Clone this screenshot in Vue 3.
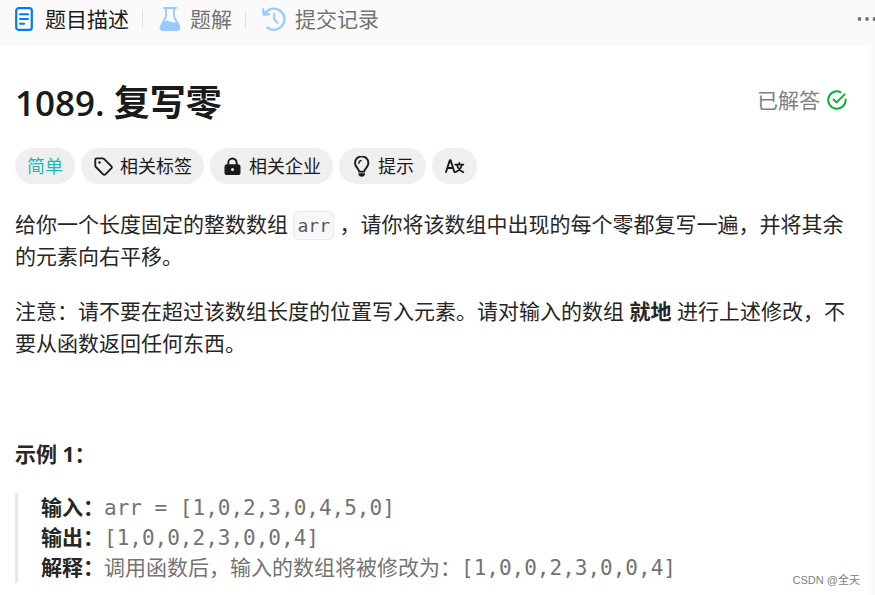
<script setup>
const tags = [
  { icon: 'tag', label: '相关标签' },
  { icon: 'lock', label: '相关企业' },
  { icon: 'bulb', label: '提示' },
]
</script>

<template>
  <div class="page" lang="zh-CN">
    <header class="tabs">
      <nav class="tab-list" aria-label="题目">
        <button type="button" class="tab active">
          <svg class="tab-icon doc" viewBox="0 0 18 24" fill="none" stroke="#007aff">
            <rect x="1.2" y="1.2" width="15.6" height="21.6" rx="2.4" stroke-width="2.2" />
            <path d="M5 7.2h8M5 12h8M5 16.7h4" stroke-width="2" stroke-linecap="round" />
          </svg>
          <span>题目描述</span>
        </button>
        <span class="divider"></span>
        <button type="button" class="tab">
          <svg class="tab-icon flask" viewBox="0 0 22 24" fill="none" stroke="#99caff">
            <path d="M5 1h12" stroke-width="2" stroke-linecap="round" />
            <path d="M7 1v8.5L1.8 19.4Q.6 23 4 23h14q3.400 0 2.200-3.600L15 9.500V1" stroke-width="1.800" />
            <path d="M4.300 14.500Q8 12.800 11 14.500T17.700 14.500L21 20Q21.500 23.500 18 23.500H4Q.5 23.500 1 20Z" fill="#99caff" stroke="none" />
          </svg>
          <span>题解</span>
        </button>
        <span class="divider"></span>
        <button type="button" class="tab">
          <svg class="tab-icon history" viewBox="0 0 24 24" fill="none" stroke="#99caff" stroke-width="2.200" stroke-linecap="round" stroke-linejoin="round">
            <path d="M2.600 7A10.600 10.600 0 1 1 5.400 20.600" />
            <path d="M1.200 2.400L1.800 7.800L7 7.200" />
            <path d="M12.200 7v5.500l3.400 3.200" />
          </svg>
          <span>提交记录</span>
        </button>
      </nav>
      <button type="button" class="more" aria-label="更多">
        <svg viewBox="0 0 20 6" fill="#737373">
          <circle cx="2.500" cy="3" r="1.900" />
          <circle cx="10" cy="3" r="1.900" />
          <circle cx="17.500" cy="3" r="1.900" />
        </svg>
      </button>
    </header>

    <main class="panel">
      <div class="heading">
        <h1><span class="number">1089. </span>复写零</h1>
        <div class="solved">
          <span>已解答</span>
          <svg viewBox="0 0 20 20" fill="none" stroke="#02b128" stroke-width="1.900" stroke-linecap="round" stroke-linejoin="round">
            <path d="M13.500 2.100A8.700 8.700 0 1 0 18.600 9.500" />
            <path d="M6.500 9.500L9.600 12.300L17.500 4.300" />
          </svg>
        </div>
      </div>

      <div class="tags">
        <button type="button" class="tag easy">简单</button>
        <button v-for="tag in tags" :key="tag.icon" type="button" class="tag">
          <svg v-if="tag.icon === 'tag'" viewBox="0 0 21 21" fill="none" stroke="#1a1a1a" stroke-width="1.800" stroke-linejoin="round">
            <path d="M2.300 3.600Q2.300 2.300 3.600 2.300L9.700 2.300Q10.400 2.300 11 2.900L18.300 10.200Q19.400 11.300 18.300 12.400L12.400 18.300Q11.300 19.400 10.200 18.300L2.900 11Q2.300 10.400 2.300 9.700Z" />
            <circle cx="6.500" cy="6.500" r="1.200" fill="#1a1a1a" stroke="none" />
          </svg>
          <svg v-else-if="tag.icon === 'lock'" viewBox="0 0 21 21">
            <path d="M6.300 9V6.700a4.200 4.200 0 0 1 8.400 0V9" fill="none" stroke="#1a1a1a" stroke-width="1.900" />
            <rect x="2.500" y="8.300" width="16" height="10.700" rx="2.600" fill="#1a1a1a" />
            <circle cx="10.500" cy="13.600" r="1.500" fill="#efefef" />
          </svg>
          <svg v-else viewBox="0 0 21 21" fill="none" stroke="#1a1a1a" stroke-width="1.900">
            <path d="M8.200 15.600C8 13 4 11.200 4 7A6.700 6.700 0 0 1 17.400 7C17.400 11.200 13.400 13 13.200 15.600Z" stroke-linejoin="round" />
            <path d="M7.800 7.200Q8 4.900 10.100 4.600" stroke-width="1.500" stroke-linecap="round" />
            <path d="M7.500 17.200h6.400v1.300q-.5 2.300-3.200 2.300t-3.200-2.300z" fill="#1a1a1a" stroke="none" />
          </svg>
          <span>{{ tag.label }}</span>
        </button>
        <button type="button" class="tag" aria-label="翻译">
          <svg viewBox="0 0 21 21" fill="none" stroke="#1a1a1a" stroke-width="1.900" stroke-linecap="round" stroke-linejoin="round">
            <path d="M2 16L5.800 4.200h.8L10.400 16M3.400 12h5.500" />
            <path d="M11.200 8.600h8.200M15.300 6.800v1.800M13 9.200Q14.500 14 19.400 16.200M17.800 9.200Q16.400 14 11.300 16.200" stroke-width="1.700" />
          </svg>
        </button>
      </div>

      <article class="description">
        <p>给你一个长度固定的整数数组 <code>arr</code> ，请你将该数组中出现的每个零都复写一遍，并将其余的元素向右平移。</p>
        <p>注意：请不要在超过该数组长度的位置写入元素。请对输入的数组 <strong>就地</strong> 进行上述修改，不要从函数返回任何东西。</p>
        <h2>示例 1：</h2>
        <pre><strong>输入：</strong>arr = [1,0,2,3,0,4,5,0]
<strong>输出：</strong>[1,0,0,2,3,0,0,4]
<strong>解释：</strong>调用函数后，输入的数组将被修改为：[1,0,0,2,3,0,0,4]</pre>
      </article>
    </main>
    <div class="watermark">CSDN @全天</div>
  </div>
</template>

<style>
body {
  margin: 0;
  background: #fafafa;
}
</style>

<style scoped>
.page {
  position: relative;
  display: flex;
  flex-direction: column;
  min-height: 100vh;
  overflow: hidden;
  box-sizing: border-box;
  background: #fafafa;
  color: #262626;
  font-family: "Open Sans", "Noto Sans CJK SC", sans-serif;
  font-size: 21px;
}
button {
  border: 0;
  padding: 0;
  font: inherit;
  color: inherit;
  background: none;
  cursor: pointer;
}
.tabs {
  display: flex;
  justify-content: space-between;
  align-items: flex-start;
  height: 46px;
  padding-left: 15px;
  box-sizing: border-box;
}
.tab-list {
  display: flex;
  align-items: center;
  height: 38px;
}
.tab {
  display: flex;
  align-items: center;
  gap: 9px;
  color: #737373;
  line-height: 32px;
}
.tab.active {
  gap: 12px;
  color: #1a1a1a;
}
.tab-icon {
  height: 24px;
}
.doc {
  width: 18px;
}
.flask {
  width: 22px;
}
.history {
  width: 24px;
}
.divider {
  width: 1px;
  height: 18px;
  margin: 0 16px 0 13px;
  background: #e2e2e2;
}
.more {
  display: flex;
  align-items: center;
  height: 38px;
  margin-right: -2px;
}
.more svg {
  width: 20px;
  height: 6px;
}
.panel {
  flex: 1;
  margin-right: 4px;
  padding: 32px 24px 12px 15px;
  background: #fff;
}
.heading {
  display: flex;
  justify-content: space-between;
  align-items: flex-start;
}
h1 {
  margin: 0;
  font-size: 36px;
  line-height: 50px;
  font-weight: 600;
  color: #1a1a1a;
}
.number {
  font-size: 35px;
}
.solved {
  display: flex;
  align-items: center;
  gap: 7px;
  color: #808080;
  line-height: 44px;
}
.solved svg {
  width: 20px;
  height: 20px;
}
.tags {
  display: flex;
  flex-wrap: wrap;
  gap: 6px;
  margin-top: 20px;
}
.tag {
  display: flex;
  align-items: center;
  gap: 6px;
  height: 36px;
  padding: 0 12px;
  border-radius: 18px;
  background: #efefef;
  color: #1a1a1a;
  font-size: 18px;
  line-height: 24px;
}
.tag svg {
  width: 21px;
  height: 21px;
}
.tag.easy {
  color: #1cbaba;
}
.description {
  margin-top: 24px;
}
p {
  margin: 0 0 23px;
  line-height: 32px;
}
code {
  padding: 3px;
  border: 1px solid #e8e8e8;
  border-radius: 6px;
  background: #f7f7f7;
  color: #595959;
  font-family: "DejaVu Sans Mono", monospace;
  font-size: 18px;
  line-height: 20px;
}
strong {
  font-weight: 700;
  color: #262626;
}
h2 {
  margin: 79px 0 23px;
  font-size: 21px;
  line-height: 32px;
  font-weight: 700;
}
pre {
  margin: 0;
  padding-left: 23px;
  border-left: 3px solid #e8e8e8;
  color: #737373;
  font-family: "DejaVu Sans Mono", "Noto Sans CJK SC", monospace;
  font-size: 21px;
  line-height: 30px;
  white-space: pre-wrap;
}
pre strong {
  font-family: "Open Sans", "Noto Sans CJK SC", sans-serif;
  line-height: 24px;
}
.watermark {
  position: absolute;
  right: 15px;
  bottom: 6px;
  color: #808080;
  font-family: "Liberation Sans", "Noto Sans CJK SC", sans-serif;
  font-size: 11px;
  line-height: 18px;
}
</style>
